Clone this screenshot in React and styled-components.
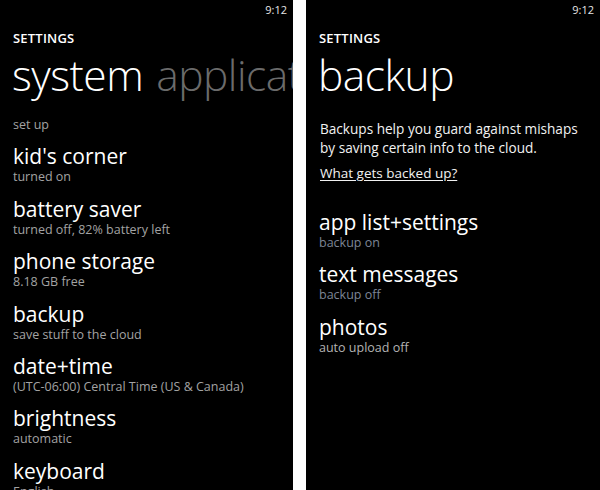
import React from "react";
import styled, { createGlobalStyle } from "styled-components";

const Global = createGlobalStyle`
  html, body { margin: 0; padding: 0; background: #fff; }
  body { font-family: "Open Sans", "Noto Sans", sans-serif; }
`;

const Stage = styled.div`
  display: flex;
  gap: 13px;
  width: 600px;
  height: 490px;
  background: #fff;
  overflow: hidden;
`;

const Screen = styled.div`
  flex: ${(p) => (p.$w ? `0 0 ${p.$w}px` : "1 1 0")};
  background: #000;
  color: #fff;
  display: flex;
  flex-direction: column;
  overflow: hidden;
  min-width: 0;
  & > * { flex-shrink: 0; }
`;

const StatusBar = styled.div`
  height: 18px;
  display: flex;
  justify-content: flex-end;
  align-items: center;
  padding-right: 6px;
  font-size: 11px;
  color: #e6e6e6;
`;

const AppLabel = styled.div`
  margin: 11px 0 0 13px;
  font-size: 13px;
  font-weight: 600;
  line-height: 18px;
  letter-spacing: 0.2px;
`;

const TitleRow = styled.div`
  display: flex;
  gap: 13px;
  margin: 4px 0 0 12px;
  white-space: nowrap;
  font-size: 42.5px;
  font-weight: 300;
  line-height: 48px;
  letter-spacing: -0.5px;
`;

const Pivot = styled.span`
  color: ${(p) => (p.$dim ? "#6b6b6b" : "#fff")};
`;

const List = styled.div`
  display: flex;
  flex-direction: column;
  padding-left: 13px;
  margin-top: ${(p) => p.$top}px;
`;

const Item = styled.div`
  display: flex;
  flex-direction: column;
  flex-shrink: 0;
  padding-bottom: 11.4px;
`;

const ItemTitle = styled.div`
  font-size: 21px;
  line-height: 27px;
  white-space: nowrap;
`;

const ItemSub = styled.div`
  font-size: 12.5px;
  line-height: 14px;
  color: ${(p) => p.$c || "#a3a3a3"};
  white-space: nowrap;
`;

const Para = styled.p`
  margin: 21px 0 0 14px;
  font-size: 13.6px;
  line-height: 18.5px;
  color: #f2f2f2;
`;

const Link = styled.a`
  display: inline-block;
  margin: 7px 0 0 14px;
  font-size: 13.5px;
  line-height: 18px;
  color: #f2f2f2;
  text-decoration: underline;
  text-underline-offset: 2px;
`;

const leftItems = [
  ["kid's corner", "turned on"],
  ["battery saver", "turned off, 82% battery left"],
  ["phone storage", "8.18 GB free"],
  ["backup", "save stuff to the cloud"],
  ["date+time", "(UTC-06:00) Central Time (US & Canada)"],
  ["brightness", "automatic"],
  ["keyboard", "English"],
];

const rightItems = [
  ["app list+settings", "backup on", "#7d8596"],
  ["text messages", "backup off", "#7d8596"],
  ["photos", "auto upload off", "#b3b3b3"],
];

export default function App() {
  return (
    <>
      <Global />
      <Stage>
        <Screen $w={293}>
          <StatusBar>9:12</StatusBar>
          <AppLabel>SETTINGS</AppLabel>
          <TitleRow>
            <Pivot>system</Pivot>
            <Pivot $dim>applications</Pivot>
          </TitleRow>
          <List $top={19}>
            <Item>
              <ItemSub>set up</ItemSub>
            </Item>
            {leftItems.map(([t, s]) => (
              <Item key={t}>
                <ItemTitle>{t}</ItemTitle>
                <ItemSub>{s}</ItemSub>
              </Item>
            ))}
          </List>
        </Screen>
        <Screen>
          <StatusBar>9:12</StatusBar>
          <AppLabel>SETTINGS</AppLabel>
          <TitleRow>
            <Pivot>backup</Pivot>
          </TitleRow>
          <Para>
            Backups help you guard against mishaps
            <br />
            by saving certain info to the cloud.
          </Para>
          <div>
            <Link>What gets backed up?</Link>
          </div>
          <List $top={26}>
            {rightItems.map(([t, s, c]) => (
              <Item key={t}>
                <ItemTitle>{t}</ItemTitle>
                <ItemSub $c={c}>{s}</ItemSub>
              </Item>
            ))}
          </List>
        </Screen>
      </Stage>
    </>
  );
}
